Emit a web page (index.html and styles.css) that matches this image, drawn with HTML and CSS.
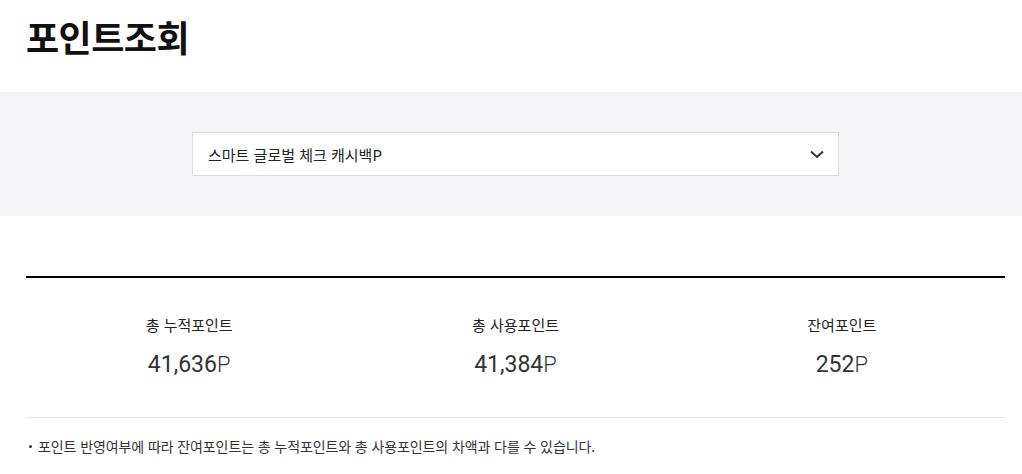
FILE: index.html
```html
<!DOCTYPE html>
<html lang="ko">
<head>
  <meta charset="UTF-8" />
  <meta name="viewport" content="width=device-width, initial-scale=1.0"/>
  <title>포인트조회</title>
  <link rel="stylesheet" href="styles.css">
</head>
<body>

<div class="page-head">
  <h1>포인트조회</h1>
</div>

<div class="card-band">
  <div class="card-select">
    <span>스마트 글로벌 체크 캐시백P</span>
    <svg class="chevron" width="14" height="9" viewBox="0 0 14 9">
      <path d="M1 1.5 L7 7 L13 1.5" fill="none" stroke="#333" stroke-width="2"/>
    </svg>
  </div>
</div>

<div class="content">
  <ul class="summary">
    <li>
      <p class="label">총 누적포인트</p>
      <p class="amount">41,636<span class="unit">P</span></p>
    </li>
    <li>
      <p class="label">총 사용포인트</p>
      <p class="amount">41,384<span class="unit">P</span></p>
    </li>
    <li>
      <p class="label">잔여포인트</p>
      <p class="amount">252<span class="unit">P</span></p>
    </li>
  </ul>

  <ul class="notice">
    <li>포인트 반영여부에 따라 잔여포인트는 총 누적포인트와 총 사용포인트의 차액과 다를 수 있습니다.</li>
  </ul>
</div>

</body>
</html>
```

FILE: styles.css
```css
body {
  font-family: "Noto Sans CJK KR", "Noto Sans", sans-serif;
  margin: 0;
  background: #fff;
  color: #222;
}
.page-head {
  height: 92px;
  padding: 0 17px 0 26px;
}
h1 {
  margin: 0;
  padding-top: 10px;
  font-size: 36px;
  line-height: 52px;
  font-weight: bold;
  color: #111;
  letter-spacing: -0.5px;
}
.card-band {
  background: #f5f5f7;
  padding: 40px 17px 40px 26px;
  display: flex;
  justify-content: center;
}
.card-select {
  width: 616px;
  height: 42px;
  background: #fff;
  border: 1px solid #ddd;
  display: flex;
  align-items: center;
  justify-content: space-between;
  padding: 0 14px 0 15px;
  font-size: 15px;
  color: #222;
}
.chevron {
  display: block;
}
.content {
  padding: 60px 17px 0 26px;
}
.summary {
  list-style: none;
  margin: 0;
  border-top: 2px solid #000;
  border-bottom: 1px solid #e3e3e3;
  display: grid;
  grid-template-columns: 1fr 1fr 1fr;
  padding: 36px 0 38px;
}
.summary li {
  text-align: center;
}
.label {
  margin: 0;
  font-size: 15px;
  line-height: 22px;
  color: #222;
}
.amount {
  margin: 15px 0 0;
  font-family: Roboto, "Liberation Sans", sans-serif;
  font-size: 23px;
  line-height: 28px;
  color: #333;
}
.unit {
  font-weight: 300;
  font-size: 22px;
  color: #333;
}
.notice {
  list-style: none;
  margin: 0;
  padding: 18px 0 0;
}
.notice li {
  position: relative;
  padding-left: 12px;
  font-size: 14px;
  line-height: 20px;
  color: #333;
  letter-spacing: -0.1px;
}
.notice li::before {
  content: "";
  position: absolute;
  left: 3px;
  top: 9px;
  width: 3px;
  height: 3px;
  border-radius: 50%;
  background: #333;
}
```
